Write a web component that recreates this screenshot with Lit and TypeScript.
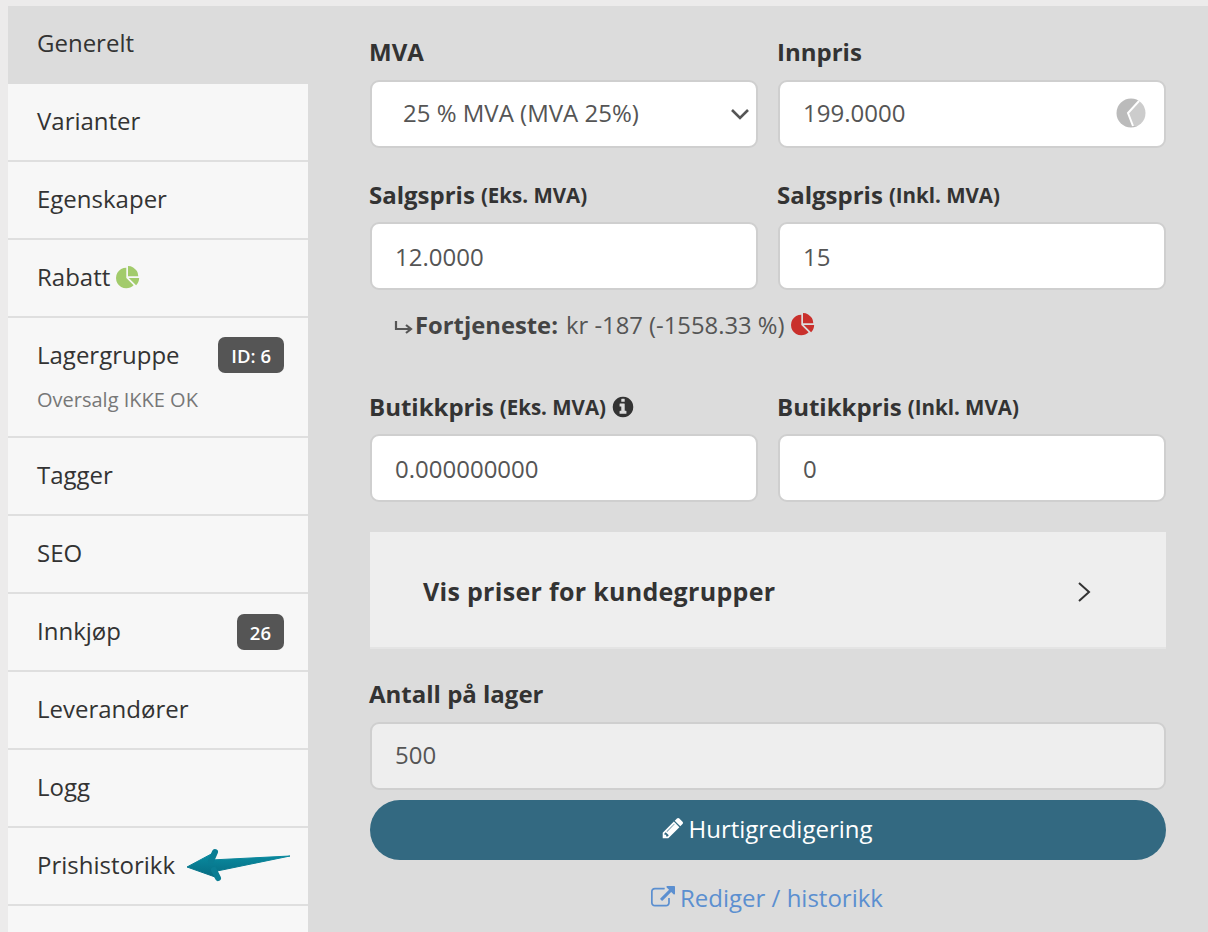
import { LitElement, html, css, svg } from "lit";
import { customElement } from "lit/decorators.js";

const PIE = "M768 890l546 546q-106 108-247.5 168t-298.5 60q-209 0-385.5-103t-279.5-279.5-103-385.5 103-385.5 279.5-279.5 385.5-103v762zm187 6h773q0 157-60 298.5t-168 247.5zm709-128h-768v-768q209 0 385.5 103t279.5 279.5 103 385.5z";
const PENCIL = "M491 1536l91-91-235-235-91 91v107h128v128h107zm523-928q0-22-22-22-10 0-17 7l-542 542q-7 7-7 17 0 22 22 22 10 0 17-7l542-542q7-7 7-17zm-54-192l416 416-832 832h-416v-416zm683 96q0 53-37 90l-166 166-416-416 166-165q36-38 90-38 53 0 91 38l235 234q37 39 37 91z";
const EXT = "M1408 928v320q0 119-84.5 203.5t-203.5 84.5h-832q-119 0-203.5-84.5t-84.5-203.5v-832q0-119 84.5-203.5t203.5-84.5h704q14 0 23 9t9 23v64q0 14-9 23t-23 9h-704q-66 0-113 47t-47 113v832q0 66 47 113t113 47h832q66 0 113-47t47-113v-320q0-14 9-23t23-9h64q14 0 23 9t9 23zm384-864v512q0 26-19 45t-45 19-45-19l-176-176-652 652q-10 10-23 10t-23-10l-114-114q-10-10-10-23t10-23l652-652-176-176q-19-19-19-45t19-45 45-19h512q26 0 45 19t19 45z";
const INFO = "M1152 1376v-160q0-14-9-23t-23-9h-96v-512q0-14-9-23t-23-9h-320q-14 0-23 9t-9 23v160q0 14 9 23t23 9h96v320h-96q-14 0-23 9t-9 23v160q0 14 9 23t23 9h448q14 0 23-9t9-23zm-128-896v-160q0-14-9-23t-23-9h-192q-14 0-23 9t-9 23v160q0 14 9 23t23 9h192q14 0 23-9t9-23zm640 416q0 209-103 385.5t-279.5 279.5-385.5 103-385.5-103-279.5-279.5-103-385.5 103-385.5 279.5-279.5 385.5-103 385.5 103 279.5 279.5 103 385.5z";

const fa = (d: string, cls: string) => html`<svg class=${cls} viewBox="0 0 1792 1792" fill="currentColor">${svg`<path d=${d}></path>`}</svg>`;

@customElement("app-root")
export class AppRoot extends LitElement {
  static styles = css`
    :host { display: block; width: 1208px; height: 932px; overflow: hidden; background: #ecebeb; font-family: "Open Sans", sans-serif; color: #333; }
    .panel { display: flex; margin: 6px 0 0 8px; height: 926px; background: #dcdcdc; }
    .side { width: 300px; flex: none; background: #f7f7f7; position: relative; }
    .item { box-sizing: border-box; height: 78px; border-bottom: 2px solid #dfdfdf; padding: 0 24px 4px 29px; display: flex; align-items: center; font-size: 24px; color: #333; gap: 6px; }
    .item.active { background: #dcdcdc; border-bottom: 0; padding-bottom: 6px; }
    .item.tall { height: 120px; display: block; padding-top: 19px; padding-bottom: 0; }
    .row { display: flex; justify-content: space-between; align-items: center; height: 36px; }
    .row span:first-child { margin-top: -2px; }
    .sub { font-size: 20px; color: #777; margin-top: 14px; line-height: 26px; }
    .spread { justify-content: space-between; padding-bottom: 0; }
    .spread > span:first-child { margin-top: -4px; }
    .badge { background: #555; color: #fff; border-radius: 7px; font-size: 18.5px; font-weight: 600; height: 36px; display: flex; align-items: center; padding: 0 13px; box-sizing: border-box; }
    .pie { width: 24px; height: 24px; flex: none; }
    .pie.green { color: #a2cb6b; margin-top: 4px; }
    .pie.red { color: #c9302c; margin-left: 7px; }
    .arrow { position: absolute; left: 170px; top: 835px; width: 120px; height: 50px; }
    .main { width: 796px; flex: none; padding: 30px 0 0 62px; }
    .grid { display: grid; grid-template-columns: 388px 388px; column-gap: 20px; }
    .lbl { box-sizing: border-box; display: flex; align-items: center; font-size: 24px; font-weight: 700; color: #333; line-height: 32px; height: 32px; margin-left: -1px; white-space: nowrap; }
    .lbl small { font-size: 20.5px; font-weight: 700; margin-left: 6px; color: #333; }
    .field { box-sizing: border-box; height: 68px; border: 2px solid #cfcfcf; border-radius: 9px; background: #fff; display: flex; align-items: center; justify-content: space-between; padding: 0 18px 0 23px; font-size: 24px; color: #555; margin-top: 12px; }
    .field.sel { padding-left: 31px; padding-right: 6px; }
    .field.dis { background: #eee; }
    .lift span { margin-top: -4px; }
    .chev { width: 20px; height: 12px; color: #555; }
    .ball { width: 30px; height: 30px; margin-top: -3px; }
    .r1 { margin-top: 30px; }
    .r2 { margin-top: 49px; }
    .r1 .lbl, .r2 .lbl { padding-top: 2px; }
    .profit { display: flex; align-items: center; height: 32px; margin-top: 19px; padding-left: 24px; font-size: 23.8px; color: #555; white-space: nowrap; }
    .profit b { color: #444; font-weight: 700; margin-right: 8px; margin-left: 2px; }
    .turn { width: 19px; height: 16px; color: #555; flex: none; margin-top: 3px; }
    .info { width: 24px; height: 24px; margin-left: 5px; color: #333; }
    .coll { box-sizing: border-box; height: 117px; margin-top: 30px; margin-bottom: -1px; padding: 2px 74px 0 53px; background: #eee; border-bottom: 2px solid #e4e4e4; display: flex; align-items: center; justify-content: space-between; font-size: 25px; font-weight: 700; color: #333; letter-spacing: .3px; }
    .coll svg { width: 16px; height: 24px; margin-top: 2px; }
    .stock { margin-top: 30px; }
    .btn { box-sizing: border-box; height: 60px; margin-top: 10px; padding-bottom: 4px; background: #336981; color: #fff; border-radius: 30px; display: flex; align-items: center; justify-content: center; font-size: 24px; font-weight: 500; gap: 3px; }
    .btn svg { width: 24px; height: 24px; margin-left: -2px; }
    .link { display: flex; align-items: center; justify-content: center; gap: 5px; margin-top: 20px; font-size: 24px; color: #5b8fd0; height: 34px; }
    .link svg { width: 24px; height: 24px; margin-top: 2px; margin-left: -2px; }
  `;

  private plain(t: string) { return html`<div class="item">${t}</div>`; }

  render() {
    return html`<div class="panel">
      <nav class="side">
        <div class="item active">Generelt</div>
        ${this.plain("Varianter")}
        ${this.plain("Egenskaper")}
        <div class="item">Rabatt ${fa(PIE, "pie green")}</div>
        <div class="item tall">
          <div class="row"><span>Lagergruppe</span><span class="badge">ID: 6</span></div>
          <div class="sub">Oversalg IKKE OK</div>
        </div>
        ${this.plain("Tagger")}
        ${this.plain("SEO")}
        <div class="item spread"><span>Innkjøp</span><span class="badge">26</span></div>
        ${this.plain("Leverandører")}
        ${this.plain("Logg")}
        ${this.plain("Prishistorikk")}
        <svg class="arrow" viewBox="0 0 120 50">
          <defs><linearGradient id="ag" x1="0" y1="0" x2="0" y2="1"><stop offset="0" stop-color="#0a8ea3"></stop><stop offset="1" stop-color="#066a80"></stop></linearGradient></defs>
          <path d="M9 26 L37 11 L33 19 L112 15 L39 30 L40 37 Z" fill="url(#ag)" stroke="url(#ag)" stroke-width="1" stroke-linejoin="round"></path>
          <path d="M37 11 L33 20 M40 37 L36 29" stroke="#0a7d93" stroke-width="6" stroke-linecap="round"></path>
        </svg>
      </nav>
      <main class="main">
        <div class="grid">
          <div><div class="lbl">MVA</div>
            <div class="field sel lift"><span>25 % MVA (MVA 25%)</span>
              <svg class="chev" viewBox="0 0 20 12"><path d="M2 2 L10 10 L18 2" fill="none" stroke="currentColor" stroke-width="2.6"></path></svg>
            </div></div>
          <div><div class="lbl">Innpris</div>
            <div class="field lift"><span>199.0000</span>
              <svg class="ball" viewBox="0 0 30 30"><circle cx="15" cy="15" r="14.5" fill="#bbb"></circle><path d="M23 3 L12 15 L17 28" fill="none" stroke="#fff" stroke-width="2"></path><path d="M23 3 L12 15 L17 28 L30 28 L30 3 Z" fill="#fff" opacity=".25"></path></svg>
            </div></div>
        </div>
        <div class="grid r1">
          <div><div class="lbl">Salgspris <small>(Eks. MVA)</small></div><div class="field"><span>12.0000</span></div></div>
          <div><div class="lbl">Salgspris <small>(Inkl. MVA)</small></div><div class="field"><span>15</span></div></div>
        </div>
        <div class="profit">
          <svg class="turn" viewBox="0 0 19 16"><path d="M2 2 V10 H16 M12 6 L17 10 L12 14" fill="none" stroke="currentColor" stroke-width="2.2"></path></svg>
          <b>Fortjeneste:</b><span>kr -187 (-1558.33 %)</span>${fa(PIE, "pie red")}
        </div>
        <div class="grid r2">
          <div><div class="lbl">Butikkpris <small>(Eks. MVA)</small>${fa(INFO, "info")}</div><div class="field"><span>0.000000000</span></div></div>
          <div><div class="lbl">Butikkpris <small>(Inkl. MVA)</small></div><div class="field"><span>0</span></div></div>
        </div>
        <div class="coll"><span>Vis priser for kundegrupper</span>
          <svg viewBox="0 0 16 24"><path d="M3 3 L13 12 L3 21" fill="none" stroke="#333" stroke-width="2"></path></svg>
        </div>
        <div class="stock">
          <div class="lbl">Antall på lager</div>
          <div class="field dis lift"><span>500</span></div>
        </div>
        <div class="btn">${fa(PENCIL, "")}<span>Hurtigredigering</span></div>
        <div class="link">${fa(EXT, "")}<span>Rediger / historikk</span></div>
      </main>
    </div>`;
  }
}
